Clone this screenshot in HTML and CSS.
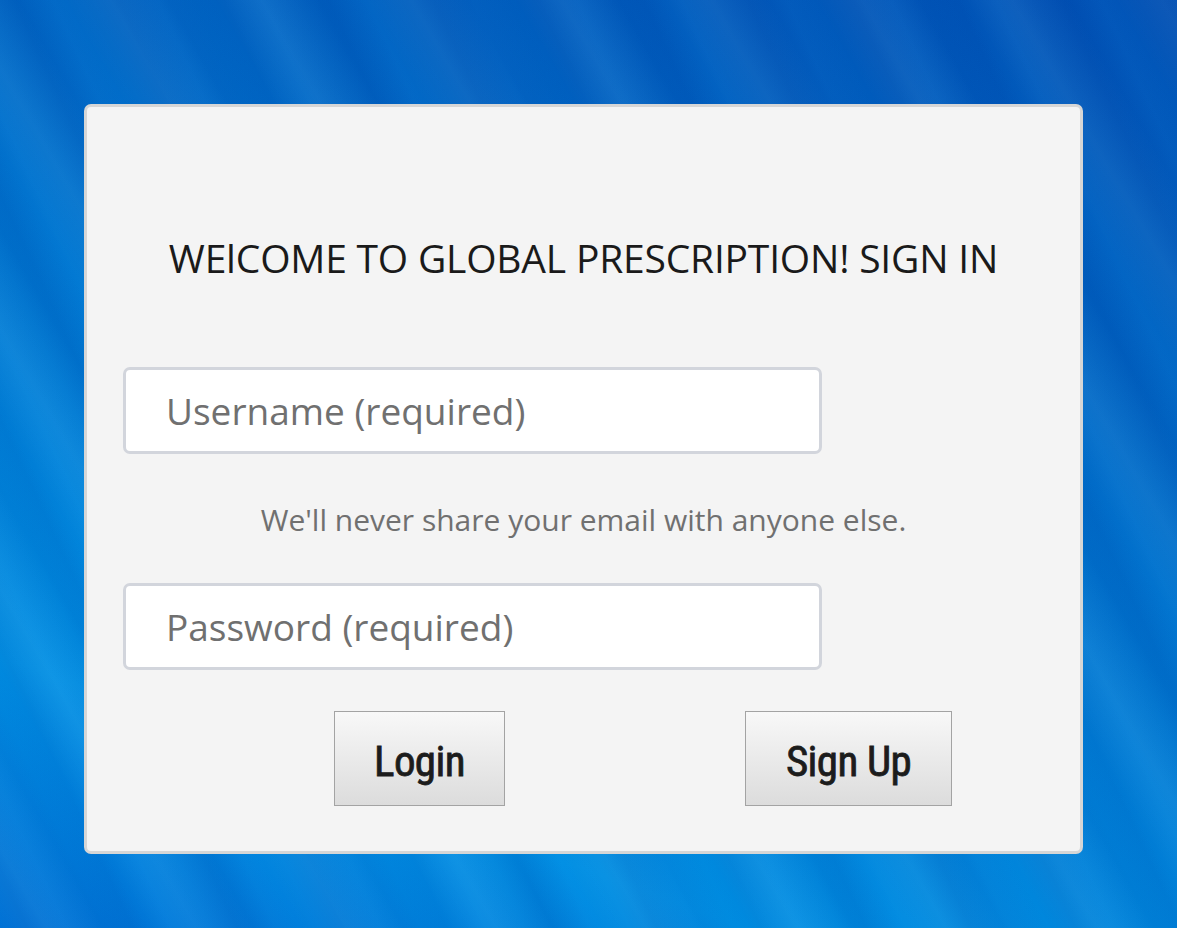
FILE: index.html
```html
<!DOCTYPE html>
<html lang="en">
<head>
<meta charset="utf-8">
<title>Global Prescription - Sign In</title>
<link rel="stylesheet" href="styles.css">
</head>
<body>
<main class="page">
  <section class="card">
    <h1 class="title">WElCOME TO GLOBAL PRESCRIPTION! SIGN IN</h1>
    <form class="form">
      <input class="field" type="text" placeholder="Username (required)">
      <p class="help">We'll never share your email with anyone else.</p>
      <input class="field" type="password" placeholder="Password (required)">
      <div class="actions">
        <button type="button" class="btn btn-login">Login</button>
        <button type="button" class="btn btn-signup">Sign Up</button>
      </div>
    </form>
  </section>
</main>
</body>
</html>
```
FILE: styles.css
```css
html, body {
  margin: 0;
  height: 100%;
}
body {
  font-family: "Open Sans", "Noto Sans", sans-serif;
  background:
    repeating-linear-gradient(60deg, rgba(255,255,255,0) 0px, rgba(255,255,255,0.05) 40px, rgba(0,40,140,0.08) 90px, rgba(255,255,255,0) 130px),
    repeating-linear-gradient(65deg, rgba(0,60,160,0) 0px, rgba(0,60,160,0.09) 25px, rgba(40,170,255,0.07) 60px, rgba(0,60,160,0) 95px),
    linear-gradient(200deg, #0050b4 0%, #0066c4 30%, #007ed6 60%, #008ee2 80%, #0072d6 100%);
  overflow: hidden;
}
.page {
  padding: 104px 0 0 84px;
}
.card {
  box-sizing: border-box;
  width: 999px;
  height: 750px;
  background: #f4f4f4;
  border: 3px solid #d6d6d6;
  border-radius: 7px;
  padding: 0 36px;
}
.title {
  margin: 125px 0 0;
  text-align: center;
  font-weight: 400;
  font-size: 39px;
  line-height: 52px;
  color: #1a1a1a;
  letter-spacing: -0.2px;
}
.form {
  margin-top: 83px;
  display: flex;
  flex-direction: column;
}
.field {
  box-sizing: border-box;
  width: 699px;
  height: 87px;
  border: 3px solid #d2d5dc;
  border-radius: 7px;
  background: #fff;
  padding: 0 40px;
  font-family: inherit;
  font-size: 37px;
  color: #333;
  outline: none;
}
.field::placeholder {
  color: #707070;
}
.help {
  margin: 0;
  height: 129px;
  line-height: 132px;
  text-align: center;
  font-size: 30px;
  color: #707070;
}
.actions {
  display: flex;
  margin-top: 41px;
  padding-left: 211px;
  gap: 240px;
}
.btn {
  box-sizing: border-box;
  height: 95px;
  border: 1px solid #a3a3a3;
  border-radius: 0;
  background: linear-gradient(#f8f8f8, #dcdcdc);
  font-family: "Liberation Sans Narrow", "Roboto Condensed", "Liberation Sans", sans-serif;
  font-weight: 400;
  font-size: 43px;
  letter-spacing: -0.6px;
  -webkit-text-stroke: 0.8px #1c1c1c;
  color: #1c1c1c;
  padding: 4px 0 0;
}
.btn-login { width: 171px; }
.btn-signup { width: 207px; }
```
